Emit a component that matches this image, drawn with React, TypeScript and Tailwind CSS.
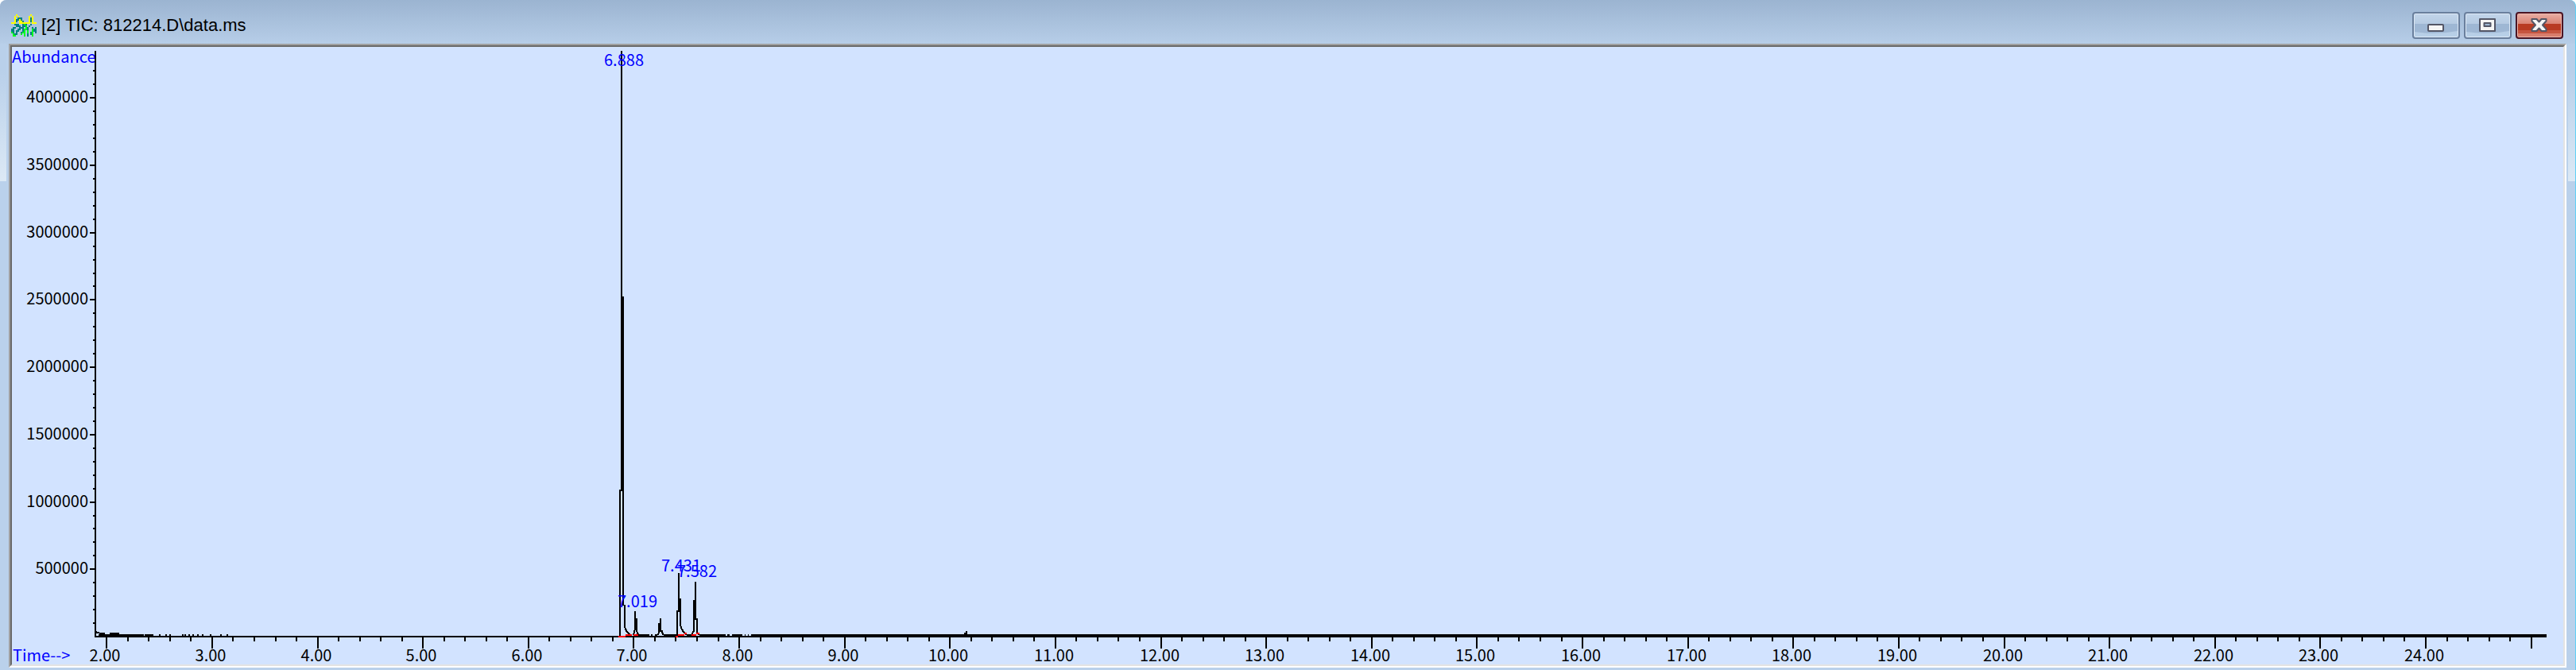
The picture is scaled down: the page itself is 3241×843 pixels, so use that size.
import { useLayoutEffect, useRef, useState } from "react";

type Point = [number, number];

const T_MIN = 1.892;
const T_MAX = 25.146;
const A_MAX = 4350000;
const MARGIN = { left: 105, right: 21, top: 5, bottom: 35 };

const MAIN_PEAK: Point[] = [
  [6.868, 0], [6.868, 1085000], [6.883, 1085000], [6.883, 4350000],
  [6.883, 2520000], [6.898, 2520000], [6.898, 235000], [6.914, 230000],
  [6.914, 82000], [6.925, 55000], [6.94, 36000], [6.97, 14000],
];

const SMALL_PEAKS: Point[][] = [
  [[6.996, 14000], [7.004, 36000], [7.011, 60000], [7.011, 188000], [7.011, 130000], [7.028, 130000], [7.028, 40000], [7.034, 30000], [7.04, 14000]],
  [[7.232, 14000], [7.24, 36000], [7.24, 95000], [7.255, 95000], [7.255, 134000], [7.255, 40000], [7.268, 40000], [7.275, 14000]],
  [[7.415, 0], [7.415, 190000], [7.43, 190000], [7.43, 470000], [7.43, 280000], [7.445, 280000], [7.445, 85000], [7.46, 55000], [7.475, 36000], [7.5, 14000]],
  [[7.55, 14000], [7.56, 36000], [7.572, 40000], [7.572, 265000], [7.587, 265000], [7.587, 405000], [7.587, 130000], [7.6, 130000], [7.6, 25000], [7.63, 14000]],
];

const BASELINE: Point[] = [
  [1.92, 2.35], [2.36, 2.44], [7.04, 7.145], [7.16, 7.18], [7.2, 7.225],
  [7.28, 7.41], [7.5, 7.55], [7.63, 7.87], [7.89, 7.91], [7.93, 8.03], [8.05, 8.06],
  [8.08, 8.09], [8.11, 25.146],
];

const SPIKES = [2.5, 2.56, 2.6, 2.72, 2.745, 2.78, 2.82, 2.865, 2.91, 2.985, 3.08, 3.14];

const START_NOISE: Point[][] = [
  [[1.892, 40000], [1.91, 30000], [1.95, 24000]],
  [[1.95, 24000], [1.985, 24000]],
  [[2.03, 24000], [2.12, 24000]],
  [[10.135, 22000], [10.155, 26000], [10.155, 44000]],
];

const INTEGRATION: Point[][] = [
  [[6.852, 0], [6.92, 0]],
  [[6.92, 14000], [6.98, 14000]],
  [[6.996, 14000], [7.045, 14000]],
  [[7.395, 0], [7.42, 0]],
  [[7.42, 14000], [7.48, 14000]],
  [[7.48, 26000], [7.5, 26000]],
  [[7.55, 14000], [7.59, 14000]],
  [[7.59, 26000], [7.625, 26000]],
];

const PEAK_LABELS = [
  { text: "6.888", time: 6.906, abundance: 4238000 },
  { text: "7.019", time: 7.037, abundance: 217000 },
  { text: "7.431", time: 7.449, abundance: 482000 },
  { text: "7.582", time: 7.6, abundance: 441000 },
];

function Chromatogram() {
  const ref = useRef<SVGSVGElement>(null);
  const [size, setSize] = useState({ width: 0, height: 0 });

  useLayoutEffect(() => {
    const node = ref.current;
    if (!node) return;
    const measure = () => {
      const box = node.getBoundingClientRect();
      setSize({ width: box.width, height: box.height });
    };
    measure();
    const observer = new ResizeObserver(measure);
    observer.observe(node);
    return () => observer.disconnect();
  }, []);

  const right = size.width - MARGIN.right;
  const base = size.height - MARGIN.bottom;
  const x = (t: number) =>
    Math.round(MARGIN.left + ((t - T_MIN) / (T_MAX - T_MIN)) * (right - MARGIN.left));
  const y = (a: number) => Math.round(base - (a / A_MAX) * (base - MARGIN.top));
  const points = (list: Point[]) => list.map(([t, a]) => `${x(t)},${y(a)}`).join(" ");

  const yTicks = Array.from({ length: 42 }, (_, i) => (i + 1) * 100000);
  const xTicks = Array.from({ length: 116 }, (_, i) => i + 10);

  return (
    <svg
      ref={ref}
      role="img"
      aria-label="Total ion chromatogram"
      className="block min-h-96 w-full flex-1 bg-[#d2e3ff] text-[20px]"
      style={{ fontFamily: '"Noto Sans CJK SC", "Liberation Sans", sans-serif' }}
    >
      {size.width > 0 && (
        <>
          <g stroke="#000" strokeWidth="2" fill="none" shapeRendering="crispEdges">
            <line x1={MARGIN.left} x2={MARGIN.left} y1={MARGIN.top} y2={base + 1} />
            <line x1={MARGIN.left - 1} x2={right} y1={base} y2={base} />
            {yTicks.map((a) => (
              <line key={a} x1={MARGIN.left - (a % 500000 === 0 ? 7 : 3)} x2={MARGIN.left} y1={y(a)} y2={y(a)} />
            ))}
            {xTicks.map((i) => (
              <line key={i} x1={x(i / 5)} x2={x(i / 5)} y1={base} y2={base + (i % 5 === 0 ? 15 : 6)} />
            ))}
            {BASELINE.map(([from, to]) => (
              <line key={from} x1={x(from)} x2={x(to)} y1={base - 2} y2={base - 2} />
            ))}
            {SPIKES.map((t) => (
              <line key={t} x1={x(t)} x2={x(t)} y1={base - 3} y2={base} />
            ))}
            {[MAIN_PEAK, ...SMALL_PEAKS, ...START_NOISE].map((trace, i) => (
              <polyline key={i} points={points(trace)} />
            ))}
          </g>
          <g stroke="#f00" strokeWidth="2" fill="none" shapeRendering="crispEdges">
            {INTEGRATION.map((trace, i) => (
              <polyline key={i} points={points(trace)} />
            ))}
          </g>
          <g fill="#000" textAnchor="end">
            {yTicks.filter((a) => a % 500000 === 0).map((a) => (
              <text key={a} x={MARGIN.left - 9} y={y(a) + 6}>{a}</text>
            ))}
          </g>
          <g fill="#000" textAnchor="middle">
            {xTicks.filter((i) => i % 5 === 0 && i < 125).map((i) => (
              <text key={i} x={x(i / 5) - 2} y={base + 31}>{(i / 5).toFixed(2)}</text>
            ))}
          </g>
          <g fill="#00f">
            <text x="0" y="20">Abundance</text>
            <text x="1" y={base + 31}>Time--&gt;</text>
            {PEAK_LABELS.map((label) => (
              <text key={label.text} x={x(label.time)} y={y(label.abundance)} textAnchor="middle">
                {label.text}
              </text>
            ))}
          </g>
        </>
      )}
    </svg>
  );
}

const ICON_ROWS = [
  "...y........y...",
  "..y.y......y.y..",
  "..y.ttt....yty..",
  "..yttyt....yty..",
  "..yt.yyt...yty..",
  "yyy..yyyyyyy.yyy",
  "..ttt..tgt..t...",
  "...ttt.ttg.t....",
  ".tt..ttt.gt..t.t",
  "tt..tt.tggt..gtt",
  "tt.tt..tg.g..gtt",
  "gt.t..tgg.g.tg.t",
  ".gtt..g.g.t.tg..",
  ".gg.....g.t..g..",
];
const ICON_COLORS: Record<string, string> = { y: "#ffff00", t: "#008080", g: "#00ff20" };

function AppIcon() {
  return (
    <svg viewBox="0 0 16 14" className="mt-2 h-7 w-8 shrink-0" shapeRendering="crispEdges" aria-hidden="true">
      {ICON_ROWS.flatMap((row, r) =>
        row.split("").map((c, i) =>
          c === "." ? null : <rect key={`${r}-${i}`} x={i} y={r} width="1" height="1" fill={ICON_COLORS[c]} />,
        ),
      )}
    </svg>
  );
}

const PLAIN_BUTTON =
  "flex h-[34px] w-15 items-center justify-center rounded-[4px] border-2 border-[#6a7f9d] bg-linear-to-b from-[#c2d5ea] from-0% via-[#b5cae2] via-45% to-[#b8d0e8] shadow-[inset_0_0_0_1px_#dce8f5]";

export default function App() {
  return (
    <main className="flex min-h-screen flex-col rounded-t-lg border-r border-[#5fd0f5] bg-[#bad1eb] bg-linear-to-b from-[#9bb4d1] to-[#b9d0ea] bg-size-[100%_60px] bg-no-repeat">
      <header
        className="flex h-[55px] shrink-0 items-center gap-1.5 pr-[15px] pl-[14px]"
        style={{ fontFamily: '"Liberation Sans", Arial, sans-serif' }}
      >
        <AppIcon />
        <h1 className="flex-1 pt-2 text-[22px] leading-7 whitespace-nowrap text-black">[2] TIC: 812214.D\data.ms</h1>
        <div className="flex gap-[5px] pt-2">
          <button type="button" aria-label="Minimize" className={PLAIN_BUTTON}>
            <svg viewBox="0 0 56 30" className="h-[30px] w-14" aria-hidden="true">
              <path d="M1 13h54v9q-27 5-54 1z" fill="#99b1cf" opacity=".8" />
              <rect x="18" y="14" width="19" height="8" rx="1" fill="#f5f5f5" stroke="#535666" strokeWidth="2" />
            </svg>
          </button>
          <button type="button" aria-label="Maximize" className={PLAIN_BUTTON}>
            <svg viewBox="0 0 56 30" className="h-[30px] w-14" aria-hidden="true">
              <path d="M1 13h54v9q-27 5-54 1z" fill="#99b1cf" opacity=".8" />
              <path
                d="M18 7h19v15H18zM23.500 12v4h8v-4z"
                fill="#f5f5f5"
                fillRule="evenodd"
                stroke="#535666"
                strokeWidth="2"
                strokeLinejoin="round"
              />
            </svg>
          </button>
          <button
            type="button"
            aria-label="Close"
            className="flex h-[34px] w-15 items-center justify-center rounded-[4px] border-2 border-[#4b1525] bg-linear-to-b from-[#e8aea5] from-0% via-[#d98273] via-44% to-[#d77c6b] shadow-[inset_0_0_0_1px_#eeb5aa]"
          >
            <svg viewBox="0 0 56 30" className="h-[30px] w-14" aria-hidden="true">
              <path d="M1 13h54v8H1z" fill="#b83a22" />
              <path d="M1 21h54v4H1z" fill="#c65440" />
              <path
                d="M18.500 7h6l3 3.500L30.500 7h6v2.500l-4.500 5 4.500 5V22h-6l-3-3.500-3 3.500h-6v-2.500l4.500-5-4.500-5z"
                fill="#f5f5f5"
                stroke="#535666"
                strokeWidth="2"
                strokeLinejoin="round"
              />
            </svg>
          </button>
        </div>
      </header>
      <div className="flex flex-1">
        <div className="mr-[3px] h-[173px] w-2 shrink-0 bg-linear-to-b from-[#b9d0ea] from-20% to-[#dce9f5]" />
        <section className="flex min-w-0 flex-1 flex-col border-2 border-t-[#a0a0a0] border-r-white border-b-white border-l-[#a0a0a0]">
          <div className="flex flex-1 flex-col border-2 border-t-[#696969] border-r-[#e3e3e3] border-b-[#e3e3e3] border-l-[#696969]">
            <Chromatogram />
          </div>
        </section>
        <div className="ml-[2px] h-[173px] w-[9px] shrink-0 bg-linear-to-b from-[#b9d0ea] from-20% to-[#dce9f5]" />
      </div>
      <div className="h-[3px] shrink-0" />
    </main>
  );
}
